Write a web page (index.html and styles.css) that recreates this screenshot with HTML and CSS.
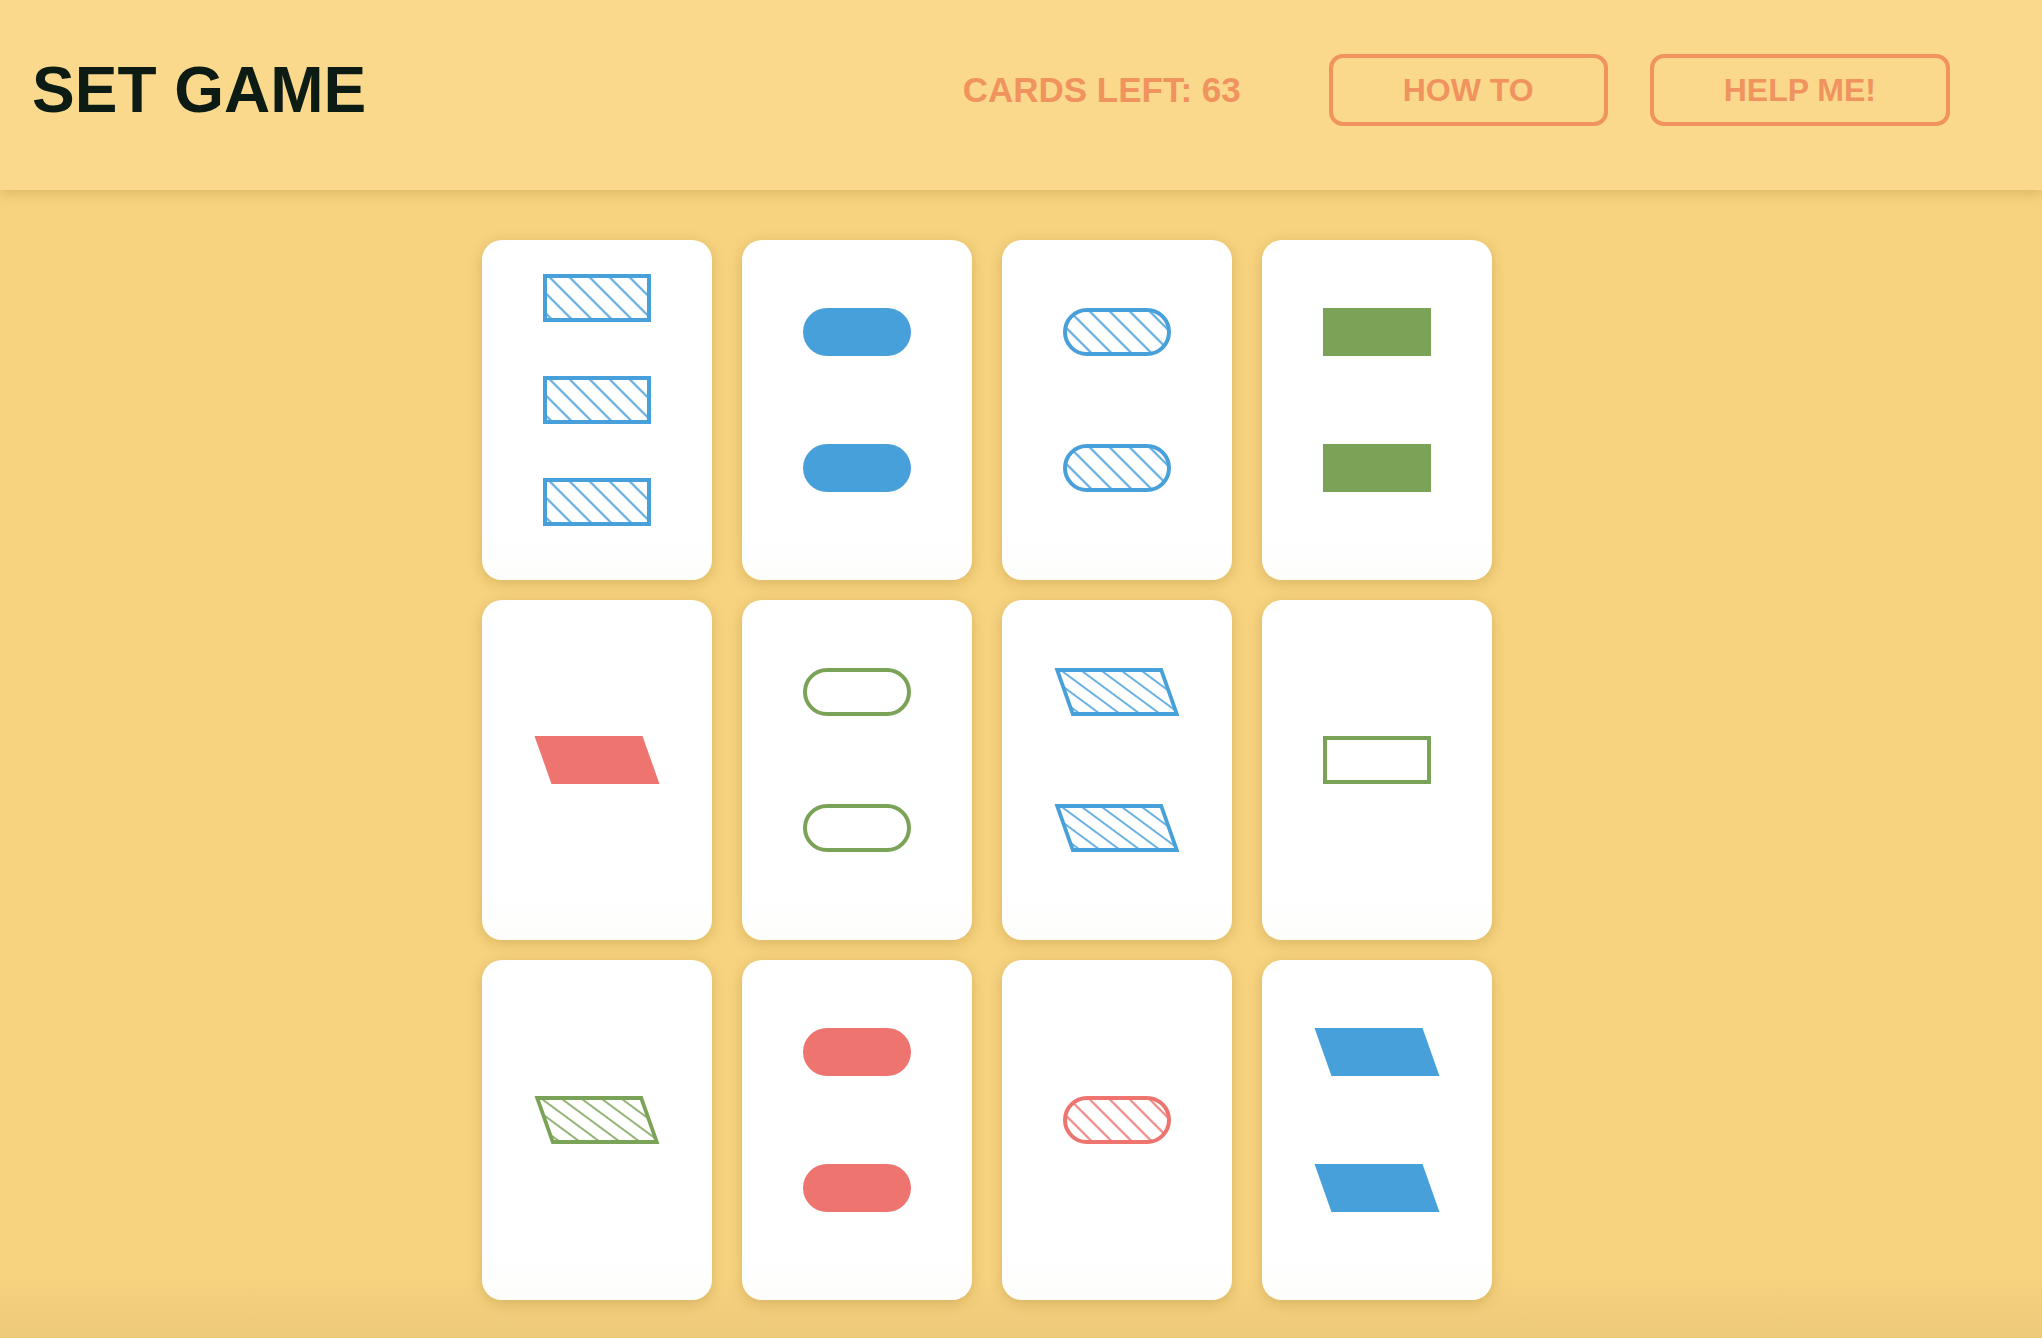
FILE: index.html
```html
<!DOCTYPE html>
<html lang="en">
<head>
<meta charset="utf-8">
<title>Set Game</title>
<link rel="stylesheet" href="styles.css">
</head>
<body>
<svg class="defs" width="0" height="0" aria-hidden="true">
  <defs>
    <pattern id="stripe-blue" patternUnits="userSpaceOnUse" width="14.142" height="14.142" patternTransform="rotate(45)">
      <rect x="0" y="10.8" width="14.142" height="1.9" fill="#48A0DA"/>
    </pattern>
    <pattern id="stripe-green" patternUnits="userSpaceOnUse" width="14.142" height="14.142" patternTransform="rotate(45)">
      <rect x="0" y="10.8" width="14.142" height="1.9" fill="#7AA357"/>
    </pattern>
    <pattern id="stripe-red" patternUnits="userSpaceOnUse" width="14.142" height="14.142" patternTransform="rotate(45)">
      <rect x="0" y="10.8" width="14.142" height="1.9" fill="#EE7470"/>
    </pattern>
  </defs>
</svg>

<header class="topbar">
  <h1 class="title">SET GAME</h1>
  <div class="controls">
    <span class="counter">CARDS LEFT: 63</span>
    <button class="btn">HOW TO</button>
    <button class="btn btn-help">HELP ME!</button>
  </div>
</header>

<main class="table">
  <div class="board">
    <!-- 1: 3 blue striped rectangles -->
    <div class="card">
      <svg class="shape" width="108" height="48" viewBox="0 0 108 48"><rect x="2" y="2" width="104" height="44" fill="url(#stripe-blue)" stroke="#48A0DA" stroke-width="4"/></svg>
      <svg class="shape" width="108" height="48" viewBox="0 0 108 48"><rect x="2" y="2" width="104" height="44" fill="url(#stripe-blue)" stroke="#48A0DA" stroke-width="4"/></svg>
      <svg class="shape" width="108" height="48" viewBox="0 0 108 48"><rect x="2" y="2" width="104" height="44" fill="url(#stripe-blue)" stroke="#48A0DA" stroke-width="4"/></svg>
    </div>
    <!-- 2: 2 blue solid ovals -->
    <div class="card">
      <svg class="shape" width="108" height="48" viewBox="0 0 108 48"><rect width="108" height="48" rx="24" fill="#48A0DA"/></svg>
      <svg class="shape" width="108" height="48" viewBox="0 0 108 48"><rect width="108" height="48" rx="24" fill="#48A0DA"/></svg>
    </div>
    <!-- 3: 2 blue striped ovals -->
    <div class="card">
      <svg class="shape" width="108" height="48" viewBox="0 0 108 48"><rect x="2" y="2" width="104" height="44" rx="22" fill="url(#stripe-blue)" stroke="#48A0DA" stroke-width="4"/></svg>
      <svg class="shape" width="108" height="48" viewBox="0 0 108 48"><rect x="2" y="2" width="104" height="44" rx="22" fill="url(#stripe-blue)" stroke="#48A0DA" stroke-width="4"/></svg>
    </div>
    <!-- 4: 2 green solid rectangles -->
    <div class="card">
      <svg class="shape" width="108" height="48" viewBox="0 0 108 48"><rect width="108" height="48" fill="#7AA357"/></svg>
      <svg class="shape" width="108" height="48" viewBox="0 0 108 48"><rect width="108" height="48" fill="#7AA357"/></svg>
    </div>

    <!-- 5: 1 red solid parallelogram -->
    <div class="card">
      <svg class="shape" width="108" height="48" viewBox="0 0 108 48"><g transform="translate(54 24) skewX(19.5) translate(-54 -24)"><rect width="108" height="48" fill="#EE7470"/></g></svg>
    </div>
    <!-- 6: 2 green outline ovals -->
    <div class="card">
      <svg class="shape" width="108" height="48" viewBox="0 0 108 48"><rect x="2" y="2" width="104" height="44" rx="22" fill="none" stroke="#7AA357" stroke-width="4"/></svg>
      <svg class="shape" width="108" height="48" viewBox="0 0 108 48"><rect x="2" y="2" width="104" height="44" rx="22" fill="none" stroke="#7AA357" stroke-width="4"/></svg>
    </div>
    <!-- 7: 2 blue striped parallelograms -->
    <div class="card">
      <svg class="shape" width="108" height="48" viewBox="0 0 108 48"><g transform="translate(54 24) skewX(19.5) translate(-54 -24)"><rect x="2" y="2" width="104" height="44" fill="url(#stripe-blue)" stroke="#48A0DA" stroke-width="4"/></g></svg>
      <svg class="shape" width="108" height="48" viewBox="0 0 108 48"><g transform="translate(54 24) skewX(19.5) translate(-54 -24)"><rect x="2" y="2" width="104" height="44" fill="url(#stripe-blue)" stroke="#48A0DA" stroke-width="4"/></g></svg>
    </div>
    <!-- 8: 1 green outline rectangle -->
    <div class="card">
      <svg class="shape" width="108" height="48" viewBox="0 0 108 48"><rect x="2" y="2" width="104" height="44" fill="none" stroke="#7AA357" stroke-width="4"/></svg>
    </div>

    <!-- 9: 1 green striped parallelogram -->
    <div class="card">
      <svg class="shape" width="108" height="48" viewBox="0 0 108 48"><g transform="translate(54 24) skewX(19.5) translate(-54 -24)"><rect x="2" y="2" width="104" height="44" fill="url(#stripe-green)" stroke="#7AA357" stroke-width="4"/></g></svg>
    </div>
    <!-- 10: 2 red solid ovals -->
    <div class="card">
      <svg class="shape" width="108" height="48" viewBox="0 0 108 48"><rect width="108" height="48" rx="24" fill="#EE7470"/></svg>
      <svg class="shape" width="108" height="48" viewBox="0 0 108 48"><rect width="108" height="48" rx="24" fill="#EE7470"/></svg>
    </div>
    <!-- 11: 1 red striped oval -->
    <div class="card">
      <svg class="shape" width="108" height="48" viewBox="0 0 108 48"><rect x="2" y="2" width="104" height="44" rx="22" fill="url(#stripe-red)" stroke="#EE7470" stroke-width="4"/></svg>
    </div>
    <!-- 12: 2 blue solid parallelograms -->
    <div class="card">
      <svg class="shape" width="108" height="48" viewBox="0 0 108 48"><g transform="translate(54 24) skewX(19.5) translate(-54 -24)"><rect width="108" height="48" fill="#48A0DA"/></g></svg>
      <svg class="shape" width="108" height="48" viewBox="0 0 108 48"><g transform="translate(54 24) skewX(19.5) translate(-54 -24)"><rect width="108" height="48" fill="#48A0DA"/></g></svg>
    </div>
  </div>
</main>
</body>
</html>
```

FILE: styles.css
```css
* {
  box-sizing: border-box;
}

html,
body {
  margin: 0;
  padding: 0;
  background: #F7D37F;
  font-family: "Liberation Sans", Arial, Helvetica, sans-serif;
}

.defs {
  display: block;
  width: 0;
  height: 0;
  overflow: hidden;
}

.topbar {
  position: relative;
  z-index: 2;
  height: 190px;
  padding: 0 92px 11px 32px;
  display: flex;
  align-items: center;
  background: #FAD98C;
  box-shadow: 0 4px 12px rgba(150, 115, 30, 0.28);
}

.title {
  margin: 0;
  font-size: 64px;
  font-weight: 700;
  line-height: 1;
  color: #0C1C15;
}

.controls {
  margin-left: auto;
  display: flex;
  align-items: center;
}

.counter {
  font-size: 35px;
  font-weight: 700;
  color: #F0935F;
  margin-right: 88px;
}

.btn {
  height: 72px;
  padding: 0 70px;
  border: 4px solid #F0935F;
  border-radius: 14px;
  background: transparent;
  color: #F0935F;
  font-family: "Liberation Sans", Arial, Helvetica, sans-serif;
  font-size: 32px;
  font-weight: 700;
  line-height: 1;
  cursor: pointer;
}

.btn-help {
  margin-left: 42px;
}

.table {
  min-height: calc(100vh - 190px);
  padding: 50px 0 38px 482px;
  background: linear-gradient(to bottom, #F7D37F 0, #F7D37F calc(100% - 64px), #EDCA7A 100%);
}

.board {
  display: grid;
  grid-template-columns: repeat(4, 230px);
  grid-auto-rows: 340px;
  column-gap: 30px;
  row-gap: 20px;
}

.card {
  background: linear-gradient(to bottom, #FFFFFF 0%, #FFFFFF 85%, #FDFDFC 100%);
  border-radius: 20px;
  box-shadow: 0 3px 14px rgba(140, 100, 20, 0.28);
  display: flex;
  flex-direction: column;
  align-items: center;
  justify-content: space-evenly;
}

.shape {
  display: block;
  overflow: visible;
  margin-bottom: 20px;
}
```
